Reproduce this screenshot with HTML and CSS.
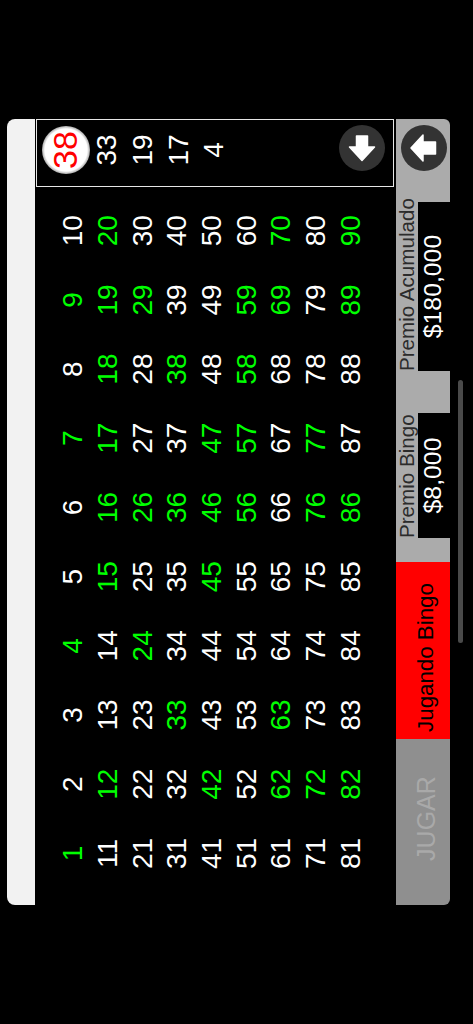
FILE: index.html
```html
<!DOCTYPE html>
<html lang="es">
<head>
    <meta charset="UTF-8">
    <meta name="viewport" content="width=device-width, initial-scale=1.0">
    <title>Bingo</title>
    <link rel="stylesheet" href="styles.css">
</head>
<body>
    <div class="viewport">
        <!-- la app corre en horizontal, todo el stage va girado -->
        <div class="stage">
            <div class="screen">
                <div class="strip"></div>
                <div class="main">
                    <div class="numbers">
                        <span class="hit">1</span><span>2</span><span>3</span><span class="hit">4</span><span>5</span><span>6</span><span class="hit">7</span><span>8</span><span class="hit">9</span><span>10</span>
                        <span>11</span><span class="hit">12</span><span>13</span><span>14</span><span class="hit">15</span><span class="hit">16</span><span class="hit">17</span><span class="hit">18</span><span class="hit">19</span><span class="hit">20</span>
                        <span>21</span><span>22</span><span>23</span><span class="hit">24</span><span>25</span><span class="hit">26</span><span>27</span><span>28</span><span class="hit">29</span><span>30</span>
                        <span>31</span><span>32</span><span class="hit">33</span><span>34</span><span>35</span><span class="hit">36</span><span>37</span><span class="hit">38</span><span>39</span><span>40</span>
                        <span>41</span><span class="hit">42</span><span>43</span><span>44</span><span class="hit">45</span><span class="hit">46</span><span class="hit">47</span><span>48</span><span>49</span><span>50</span>
                        <span>51</span><span>52</span><span>53</span><span>54</span><span>55</span><span class="hit">56</span><span class="hit">57</span><span class="hit">58</span><span class="hit">59</span><span>60</span>
                        <span>61</span><span class="hit">62</span><span class="hit">63</span><span>64</span><span>65</span><span>66</span><span>67</span><span>68</span><span class="hit">69</span><span class="hit">70</span>
                        <span>71</span><span class="hit">72</span><span>73</span><span>74</span><span>75</span><span class="hit">76</span><span class="hit">77</span><span>78</span><span>79</span><span>80</span>
                        <span>81</span><span class="hit">82</span><span>83</span><span>84</span><span>85</span><span class="hit">86</span><span>87</span><span>88</span><span class="hit">89</span><span class="hit">90</span>
                    </div>
                    <div class="board">
                        <div class="ball">38</div>
                        <div class="drawn">33</div>
                        <div class="drawn">19</div>
                        <div class="drawn">17</div>
                        <div class="drawn">4</div>
                        <div class="round-btn board-btn">
                            <svg viewBox="0 0 46 46" width="46" height="46">
                                <path class="arrow" d="M10.5 23 L24 10.5 L24 17.5 L35 17.5 L35 28.5 L24 28.5 L24 35.5 Z"/>
                            </svg>
                        </div>
                    </div>
                </div>
                <div class="bottom">
                    <div class="play-btn">JUGAR</div>
                    <div class="status-btn">Jugando Bingo</div>
                    <div class="prizes">
                        <div class="prize prize-bingo">
                            <div class="prize-label">Premio Bingo</div>
                            <div class="prize-value">$8,000</div>
                        </div>
                        <div class="prize prize-total">
                            <div class="prize-label">Premio Acumulado</div>
                            <div class="prize-value">$180,000</div>
                        </div>
                        <div class="round-btn back-btn">
                            <svg viewBox="0 0 46 46" width="46" height="46">
                                <path class="arrow" d="M23 10 L36 22 L29 22 L29 34.5 L17 34.5 L17 22 L10 22 Z"/>
                            </svg>
                        </div>
                    </div>
                </div>
            </div>
            <div class="scrollbar"></div>
        </div>
    </div>
</body>
</html>
```
FILE: styles.css
```css
html, body {
    margin: 0;
    background: #000;
}
.viewport {
    width: 473px;
    height: 1024px;
    overflow: hidden;
}
.stage {
    width: 786px;
    font-family: "Liberation Sans", Arial, sans-serif;
    transform-origin: top left;
    transform: translate(7px, 905px) rotate(-90deg);
}
.screen {
    display: flex;
    flex-direction: column;
    height: 443px;
}
.strip {
    height: 28px;
    background: #f2f2f2;
    border-radius: 8px 8px 0 0;
}
.main {
    display: flex;
    height: 361px;
}
.numbers {
    flex: 1;
    display: grid;
    grid-template-columns: repeat(10, 69.2px);
    grid-auto-rows: 34.7px;
    padding: 21px 0 0 17px;
    color: #fff;
    font-size: 28px;
}
.numbers span {
    display: flex;
    align-items: center;
    justify-content: center;
}
.numbers .hit {
    color: #00ff00;
}
.board {
    box-sizing: border-box;
    width: 68px;
    height: 358px;
    margin-top: 1px;
    border: 1px solid #e6e6e6;
    display: flex;
    flex-direction: column;
    align-items: center;
    color: #fff;
    font-size: 28px;
    padding-left: 6px;
}
.ball {
    width: 48px;
    height: 48px;
    margin-top: 4.5px;
    border-radius: 50%;
    background: radial-gradient(circle closest-side, #fff 88%, #aaa 100%);
    color: #ff0000;
    font-size: 34px;
    display: flex;
    align-items: center;
    justify-content: center;
}
.drawn {
    height: 35.7px;
    display: flex;
    align-items: center;
    justify-content: center;
}
.round-btn {
    width: 46px;
    height: 46px;
    border-radius: 50%;
    background: #333;
}
.round-btn svg {
    display: block;
}
.arrow {
    fill: #fff;
    stroke: #fff;
    stroke-width: 1.5;
    stroke-linejoin: round;
}
.board-btn {
    margin: auto 0 8px 3px;
}
.bottom {
    display: flex;
    height: 54px;
}
.play-btn {
    width: 166px;
    background: #8f8f8f;
    color: #a9a9a9;
    font-size: 25px;
    border-radius: 0 0 0 6px;
    display: flex;
    align-items: center;
    justify-content: center;
    padding: 6px 0 0 7px;
    box-sizing: border-box;
}
.status-btn {
    width: 177px;
    background: #ff0000;
    color: #000;
    font-size: 22.3px;
    display: flex;
    align-items: center;
    justify-content: center;
    padding: 6px 14px 0 0;
    box-sizing: border-box;
}
.prizes {
    flex: 1;
    display: flex;
    background: #ababab;
    border-radius: 0 0 6px 0;
}
.prize {
    display: flex;
    flex-direction: column;
}
.prize-bingo {
    width: 125px;
    margin-left: 24px;
}
.prize-total {
    width: 169px;
    margin-left: 42px;
}
.prize-label {
    height: 22px;
    line-height: 22px;
    color: #2b2b2b;
    font-size: 20.6px;
    white-space: nowrap;
}
.prize-value {
    flex: 1;
    background: #000;
    color: #fff;
    font-size: 24.8px;
    display: flex;
    align-items: center;
    justify-content: center;
    padding-bottom: 2px;
}
.back-btn {
    margin: 5px 0 0 31px;
}
.scrollbar {
    width: 263px;
    height: 5px;
    margin: 8px 0 0 262px;
    border-radius: 3px;
    background: #4a4a4a;
}
```
